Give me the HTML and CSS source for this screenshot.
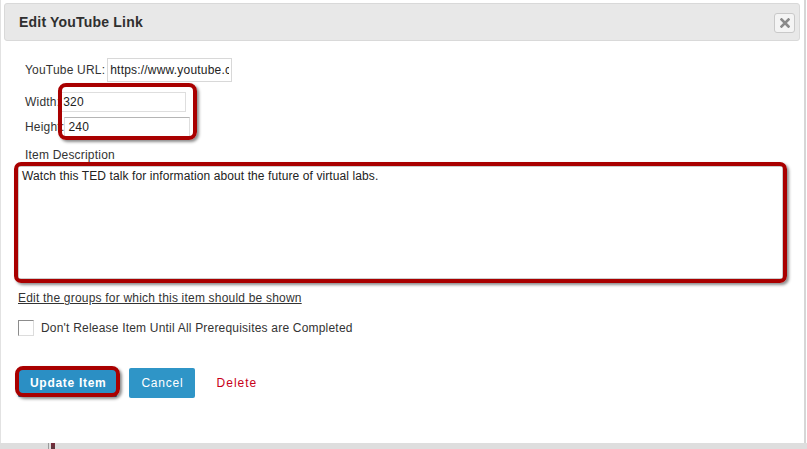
FILE: index.html
```html
<!DOCTYPE html>
<html>
<head>
<meta charset="utf-8">
<link rel="stylesheet" href="styles.css">
</head>
<body>
<div class="page">
  <div class="dialog">
    <div class="header">
      <span class="title">Edit YouTube Link</span>
      <button class="close" type="button" aria-label="close">
        <svg width="10" height="10" viewBox="0 0 10 10"><path d="M1.5 1.5 L8.5 8.5 M8.5 1.5 L1.5 8.5" stroke="#8a8a8a" stroke-width="2.6" stroke-linecap="square"/></svg>
      </button>
    </div>
    <div class="body">
      <div class="fields">
        <div class="row row-url"><label>YouTube URL:</label><input class="inp inp-url" type="text" value="https://www.youtube.com/watch?v=abc"></div>
        <div class="row row-w"><label>Width:</label><input class="inp inp-small" type="text" value="320"></div>
        <div class="row row-h"><label>Height:</label><input class="inp inp-small inp-h" type="text" value="240"></div>
        <div class="desc-label">Item Description</div>
      </div>
      <textarea class="desc">Watch this TED talk for information about the future of virtual labs.</textarea>
      <a class="groups" href="#">Edit the groups for which this item should be shown</a>
      <div class="check-row"><span class="checkbox"></span><span class="check-label">Don't Release Item Until All Prerequisites are Completed</span></div>
      <div class="buttons">
        <button class="btn btn-update" type="button">Update Item</button>
        <button class="btn btn-cancel" type="button">Cancel</button>
        <a class="delete" href="#">Delete</a>
      </div>
    </div>
    <div class="hl hl-size"></div>
    <div class="hl hl-desc"></div>
    <div class="hl hl-btn"></div>
  </div>
  <div class="under"><span class="mark"></span></div>
</div>
</body>
</html>
```
FILE: styles.css
```css
* { box-sizing: border-box; }
html, body { margin: 0; padding: 0; background: #fff; }
body { font-family: "Liberation Sans", Arial, sans-serif; font-size: 12px; color: #333; width: 807px; height: 449px; overflow: hidden; letter-spacing: 0.2px; }

.page { width: 807px; height: 449px; display: flex; flex-direction: column; }

.dialog {
  position: relative;
  width: 806px;
  height: 443px;
  background: #fff;
  border-left: 1px solid #e2e2e2;
  border-right: 2px solid #d6d6d6;
  padding-top: 3px;
}

.header {
  margin: 0 4px 0 3px;
  height: 38px;
  background: #e8e8e8;
  border: 1px solid #d9d9d9;
  border-radius: 3px;
  display: flex;
  align-items: center;
  justify-content: space-between;
  padding: 0 4px 0 14px;
}
.title { font-weight: bold; font-size: 14px; color: #2f2f2f; letter-spacing: 0.2px; }
.close {
  width: 21px; height: 20px;
  background: #f4f4f4;
  border: 1px solid #c9c9c9;
  border-radius: 3px;
  padding: 0;
  display: flex; align-items: center; justify-content: center;
  margin-top: 2px;
}

.body { padding: 0 0 0 17px; }

.fields { padding-left: 7px; padding-top: 17px; }
.row { display: flex; align-items: center; }
.row label { font-size: 12px; color: #333; margin-right: 2px; }
.row-w label, .row-h label { margin-right: 0; }
.inp {
  font-family: "Liberation Sans", Arial, sans-serif;
  font-size: 12px;
  letter-spacing: 0.2px;
  color: #222;
  border: 1px solid #d8d8d8;
  background: #fff;
  margin: 0;
  outline: none;
}
.inp-url { width: 125px; height: 24px; padding: 0 2px; }
.row-w { margin-top: 10px; }
.row-h { margin-top: 5px; }
.inp-small { width: 126px; height: 20px; padding: 0 2px; border-color: #dedede; }
.inp-h { border-top-color: #b5b5b5; padding-left: 3px; }

.desc-label { margin-top: 11px; line-height: 14px; color: #333; }

.desc {
  display: block;
  margin: 4px 0 0 0;
  width: 765px;
  height: 113px;
  border: 1px solid #ccc;
  padding: 2px 3px;
  font-family: "Liberation Sans", Arial, sans-serif;
  font-size: 12px;
  letter-spacing: 0.1px;
  color: #222;
  resize: none;
  line-height: 14px;
}

.groups {
  display: inline-block;
  margin-top: 12px;
  line-height: 14px;
  color: #333;
  text-decoration: underline;
}

.check-row { display: flex; align-items: center; margin-top: 15px; }
.checkbox {
  width: 16px; height: 16px;
  background: #fff;
  border: 1px solid;
  border-color: #8c8c8c #dcdcdc #dcdcdc #8c8c8c;
}
.check-label { margin-left: 7px; color: #333; }

.buttons { display: flex; align-items: center; margin-top: 32px; }
.btn {
  font-family: "Liberation Sans", Arial, sans-serif;
  font-size: 12px;
  color: #fff;
  border: none;
  border-radius: 2px;
  height: 30px;
  letter-spacing: 0.8px;
  padding: 0 11px 0 12px;
}
.btn-update {
  background: #2b8fc4;
  font-weight: bold;
  letter-spacing: 0.7px;
  height: 28px;
  margin-right: 12px;
  box-shadow: inset 0 -2px 0 #1f6b93;
}
.btn-cancel { background: #2f95c7; }
.delete {
  margin-left: 22px;
  color: #c80019;
  text-decoration: none;
  letter-spacing: 1px;
}

.hl {
  position: absolute;
  border: 4px solid #a90000;
  border-radius: 8px;
  box-shadow: 2px 2px 3px rgba(0,0,0,0.45);
  pointer-events: none;
}
.hl-size { left: 57px; top: 83px; width: 139px; height: 57px; }
.hl-desc { left: 13px; top: 162px; width: 773px; height: 121px; border-radius: 7px; }
.hl-btn { left: 14px; top: 366px; width: 105px; height: 31px; }

.under {
  height: 6px;
  background: #dedede;
  width: 807px;
  position: relative;
}
.mark {
  display: block;
  margin-left: 48px;
  width: 7px;
  height: 6px;
  border-left: 1px solid #9a9a9a;
  background: linear-gradient(#7a2a3a, #5a3a40);
  background-clip: content-box;
  padding-left: 2px;
}
```
